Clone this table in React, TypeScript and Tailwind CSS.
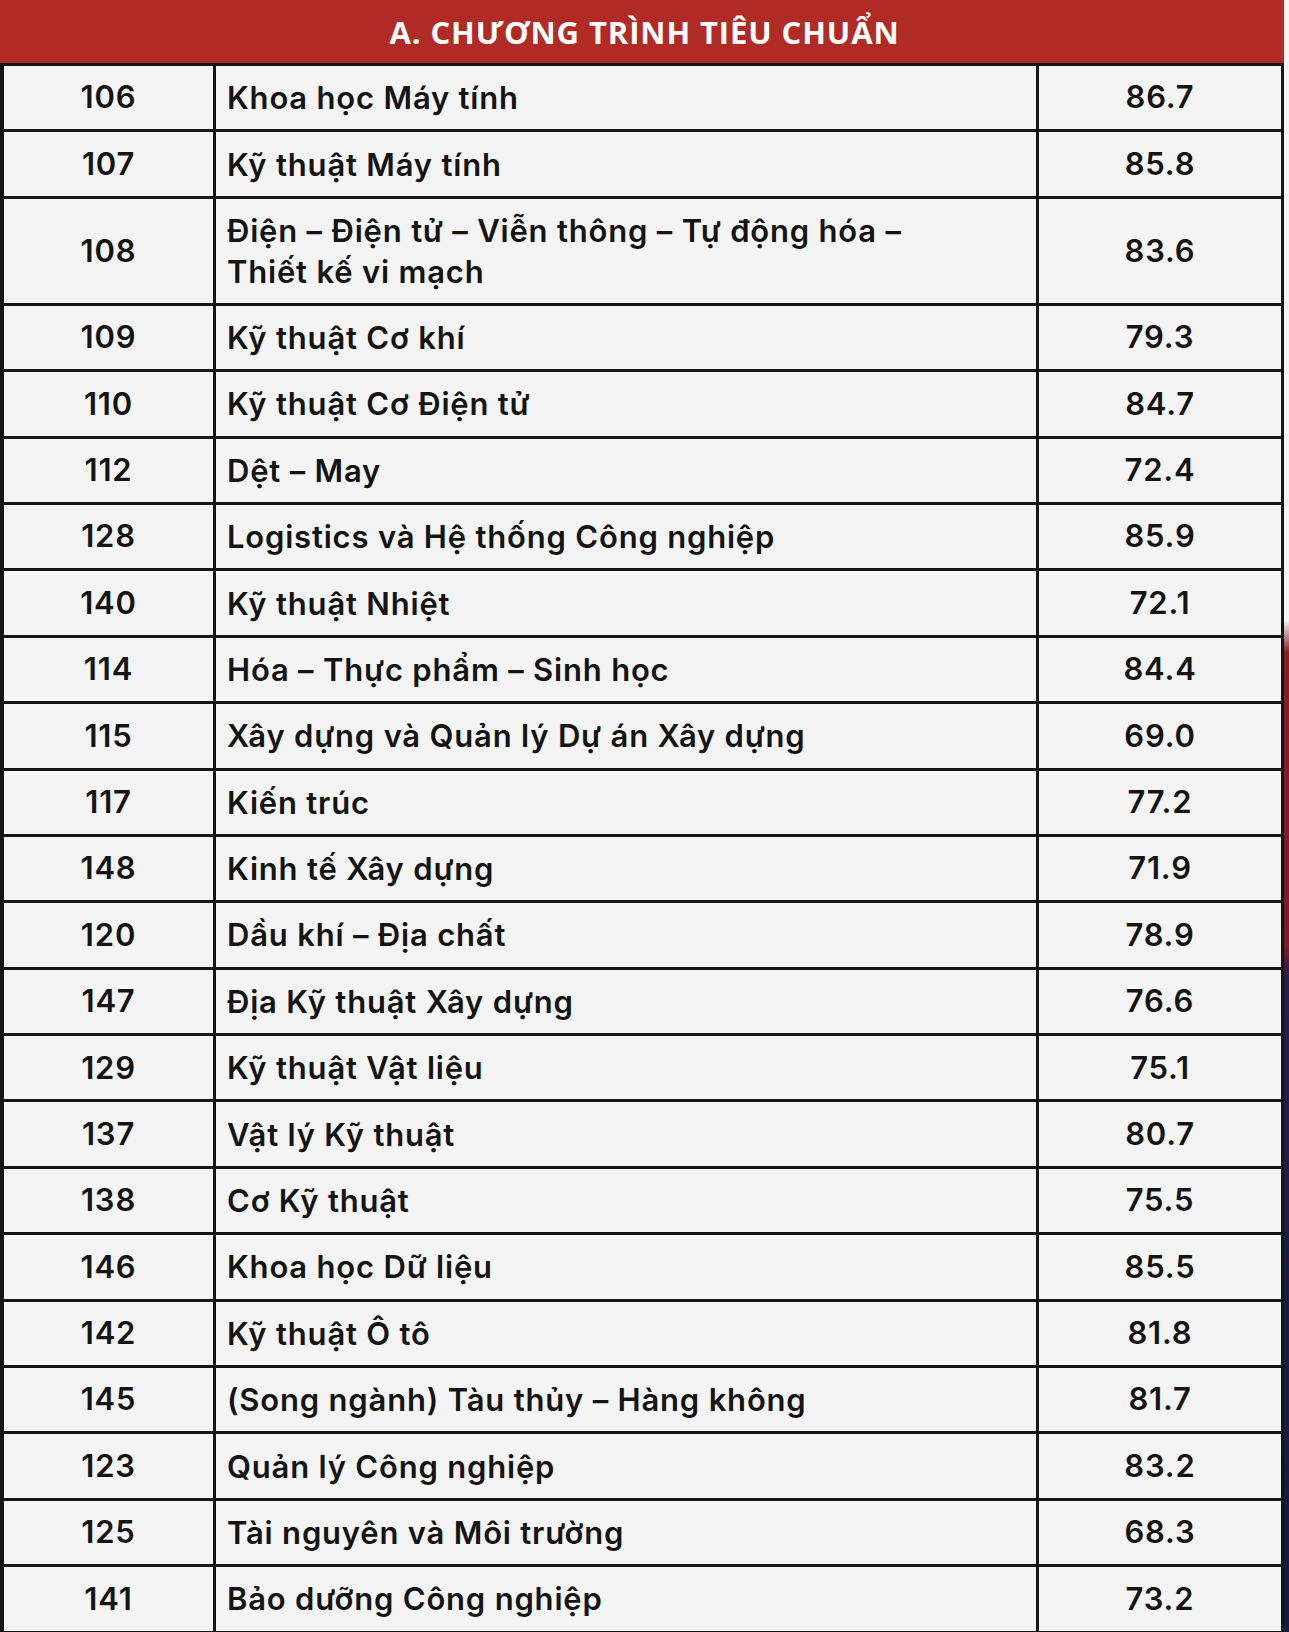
import React from 'react';

interface Row {
  code: string;
  name: React.ReactNode;
  score: string;
  tall?: boolean;
}

const rows: Row[] = [
  { code: '106', name: 'Khoa học Máy tính', score: '86.7' },
  { code: '107', name: 'Kỹ thuật Máy tính', score: '85.8' },
  {
    code: '108',
    name: (
      <>
        Điện – Điện tử – Viễn thông – Tự động hóa –
        <br />
        Thiết kế vi mạch
      </>
    ),
    score: '83.6',
    tall: true,
  },
  { code: '109', name: 'Kỹ thuật Cơ khí', score: '79.3' },
  { code: '110', name: 'Kỹ thuật Cơ Điện tử', score: '84.7' },
  { code: '112', name: 'Dệt – May', score: '72.4' },
  { code: '128', name: 'Logistics và Hệ thống Công nghiệp', score: '85.9' },
  { code: '140', name: 'Kỹ thuật Nhiệt', score: '72.1' },
  { code: '114', name: 'Hóa – Thực phẩm – Sinh học', score: '84.4' },
  { code: '115', name: 'Xây dựng và Quản lý Dự án Xây dựng', score: '69.0' },
  { code: '117', name: 'Kiến trúc', score: '77.2' },
  { code: '148', name: 'Kinh tế Xây dựng', score: '71.9' },
  { code: '120', name: 'Dầu khí – Địa chất', score: '78.9' },
  { code: '147', name: 'Địa Kỹ thuật Xây dựng', score: '76.6' },
  { code: '129', name: 'Kỹ thuật Vật liệu', score: '75.1' },
  { code: '137', name: 'Vật lý Kỹ thuật', score: '80.7' },
  { code: '138', name: 'Cơ Kỹ thuật', score: '75.5' },
  { code: '146', name: 'Khoa học Dữ liệu', score: '85.5' },
  { code: '142', name: 'Kỹ thuật Ô tô', score: '81.8' },
  { code: '145', name: '(Song ngành) Tàu thủy – Hàng không', score: '81.7' },
  { code: '123', name: 'Quản lý Công nghiệp', score: '83.2' },
  { code: '125', name: 'Tài nguyên và Môi trường', score: '68.3' },
  { code: '141', name: 'Bảo dưỡng Công nghiệp', score: '73.2' },
];

const App = () => {
  return (
    <div className="flex w-[1289px] h-[1632px] overflow-hidden bg-[#f4f4f4] font-['Inter','Noto_Sans',sans-serif] text-[#141414]">
      <div className="w-[1284px] shrink-0 bg-[#141414] pl-[4px] pr-[3px]">
        <div className="grid grid-cols-[209px_820px_1fr] gap-[3px]">
          {/* Header */}
          <div className="col-span-3 h-[63px] -mx-[4px] flex items-center justify-center bg-[#b02b25] pl-[4px] pt-[2px] font-['Open_Sans',sans-serif] text-[31px] font-bold text-white tracking-[0.9px]">
            A. CHƯƠNG TRÌNH TIÊU CHUẨN
          </div>

          {rows.map((row) => (
            <React.Fragment key={row.code}>
              <div
                className={`flex items-center justify-center bg-[#f4f4f4] text-[31px] font-semibold tracking-[0.8px] ${
                  row.tall ? 'h-[104px]' : 'h-[63.4px]'
                }`}
              >
                {row.code}
              </div>
              <div
                className={`flex items-center bg-[#f4f4f4] pl-[11px] text-[31px] font-semibold tracking-[0.8px] leading-[41px] ${
                  row.tall ? 'h-[104px]' : 'h-[63.4px]'
                }`}
              >
                <span>{row.name}</span>
              </div>
              <div
                className={`flex items-center justify-center bg-[#f4f4f4] text-[31px] font-semibold tracking-[0.8px] ${
                  row.tall ? 'h-[104px]' : 'h-[63.4px]'
                }`}
              >
                {row.score}
              </div>
            </React.Fragment>
          ))}
        </div>
      </div>
      <div className="flex-1 bg-[linear-gradient(to_bottom,#f4f4f4_0%,#f4f4f4_38%,#8a1a22_40%,#7c1a2a_58%,#1c1f4a_60%,#141a40_100%)]" />
    </div>
  );
};

export default App;
